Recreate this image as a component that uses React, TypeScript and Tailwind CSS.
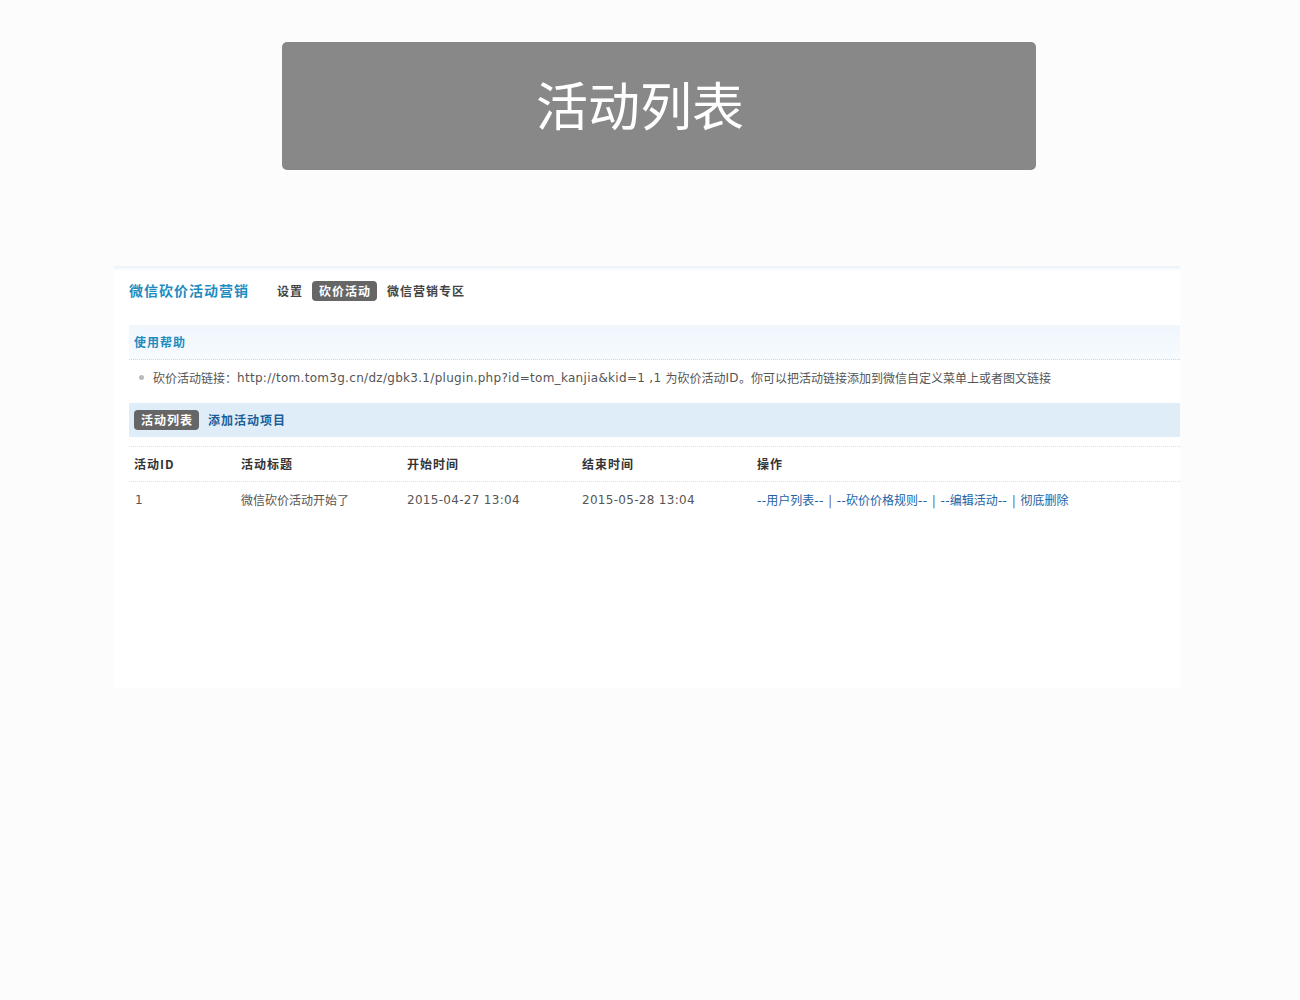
import React from "react";

const latin = { fontFamily: '"DejaVu Sans", "Noto Sans CJK SC", sans-serif', letterSpacing: "0.3px" };
const cjk = { fontFamily: '"Noto Sans CJK SC", "DejaVu Sans", sans-serif' };

const cols = ["w-[107px]", "w-[166px]", "w-[175px]", "w-[175px]", "flex-1"];

function Sep() {
  return <span className="text-[#444] px-[5px]">|</span>;
}

export default function App() {
  return (
    <div className="min-h-[1000px] bg-[#fcfcfc] pt-[42px]" style={cjk}>
      {/* page banner */}
      <div className="ml-[282px] w-[754px] h-[128px] rounded-[5px] bg-[#888888] flex items-center justify-center pr-[38px] pb-[4px]">
        <span className="text-white text-[52px] leading-none font-normal">活动列表</span>
      </div>

      {/* admin panel */}
      <div className="ml-[114px] mt-[96px] w-[1066px] h-[422px] bg-white">
        <div className="h-[5px] bg-gradient-to-b from-[#eaf1f9] to-white" />
        <div className="pl-[15px]">
          {/* plugin nav */}
          <div className="h-[39px] flex items-center">
            <span className="text-[14px] font-bold text-[#1e8cbf] tracking-[1px]">微信砍价活动营销</span>
            <span className="ml-[28px] text-[12px] font-bold text-[#444] tracking-[1px]">设置</span>
            <span className="ml-[9px] text-[12px] font-bold text-white bg-[#666666] rounded-[4px] h-[20px] pl-[7px] pr-[6px] flex items-center tracking-[1px]">
              砍价活动
            </span>
            <span className="ml-[10px] text-[12px] font-bold text-[#444] tracking-[1px]">微信营销专区</span>
          </div>

          {/* help */}
          <div className="mt-[15px] h-[35px] flex items-center pl-[5px] bg-gradient-to-b from-[#eff6fc] to-[#f7fbfe] border-b border-dotted border-[#c9d9e8]">
            <span className="text-[12px] font-bold text-[#1e8cbf] tracking-[1px]">使用帮助</span>
          </div>
          <div className="h-[35px] flex items-center pl-[10px] text-[12px] text-[#555] whitespace-pre">
            <span className="w-[5px] h-[5px] rounded-full bg-[#bbbbbb] mr-[9px]" />
            <span>砍价活动链接：</span>
            <span style={latin}>{"http://tom.tom3g.cn/dz/gbk3.1/plugin.php?id=tom_kanjia&kid=1 ,1 "}</span>
            <span>为砍价活动</span>
            <span style={latin}>ID</span>
            <span>。你可以把活动链接添加到微信自定义菜单上或者图文链接</span>
          </div>

          {/* list tabs */}
          <div className="mt-[8px] h-[34px] bg-[#deedf8] flex items-center pl-[5px]">
            <span className="h-[20px] pl-[7px] pr-[6px] rounded-[4px] bg-[#666666] text-white text-[12px] font-bold flex items-center tracking-[1px]">
              活动列表
            </span>
            <span className="ml-[9px] text-[12px] font-bold text-[#1a5e98] tracking-[1px]">添加活动项目</span>
          </div>

          {/* activity table */}
          <div className="mt-[9px] text-[12px]">
            <div className="h-[36px] flex items-center border-t border-b border-dotted border-[#dddddd] font-bold text-[#333]">
              {["活动ID", "活动标题", "开始时间", "结束时间", "操作"].map((h, i) => (
                <div key={h} className={`${cols[i]} pl-[5px] tracking-[1px]`}>{h}</div>
              ))}
            </div>
            <div className="h-[36px] flex items-center text-[#555]">
              <div className={`${cols[0]} pl-[6px]`} style={latin}>1</div>
              <div className={`${cols[1]} pl-[5px]`}>微信砍价活动开始了</div>
              <div className={`${cols[2]} pl-[5px]`} style={latin}>2015-04-27 13:04</div>
              <div className={`${cols[3]} pl-[5px]`} style={latin}>2015-05-28 13:04</div>
              <div className={`${cols[4]} pl-[5px] text-[#2263a5]`}>
                <span><span style={latin}>--</span>用户列表<span style={latin}>--</span></span>
                <Sep />
                <span><span style={latin}>--</span>砍价价格规则<span style={latin}>--</span></span>
                <Sep />
                <span><span style={latin}>--</span>编辑活动<span style={latin}>--</span></span>
                <Sep />
                <span>彻底删除</span>
              </div>
            </div>
          </div>
        </div>
      </div>
    </div>
  );
}
